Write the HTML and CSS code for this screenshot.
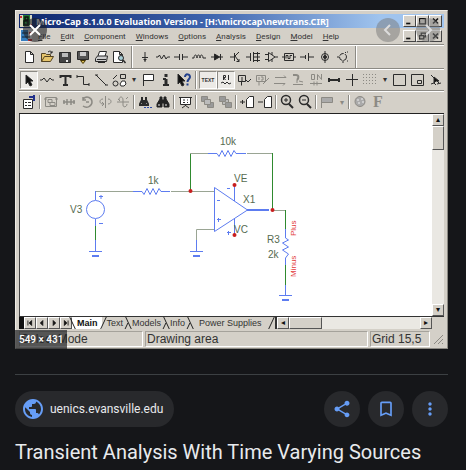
FILE: index.html
```html
<!DOCTYPE html>
<html lang="en">
<head>
  <meta charset="UTF-8">
  <meta name="viewport" content="width=device-width, initial-scale=1.0">
  <title>Transient Analysis With Time Varying Sources</title>
  <link rel="stylesheet" href="styles.css">
</head>
<body>

  <main class="viewer">
    <div class="preview">
      <div class="window">
        <div class="title-bar">
          <svg class="app-icon" viewBox="0 0 12 14"><path fill="#d8d8c0" d="M0 1h12v12H0z"/><path fill="#247a34" d="M3 1h7v11H3z"/><path fill="none" stroke="#111" stroke-width="1.5" d="M5 3h3v3H5zM4 7h4v4H4z"/><path fill="#c33" d="M0 2h2v2H0zM10 10h2v3h-2z"/></svg>
          <span class="title-text">Micro-Cap 8.1.0.0 Evaluation Version - [H:\microcap\newtrans.CIR]</span>
          <div class="win-buttons">
            <button aria-label="Minimize"><svg viewBox="0 0 12 12"><path d="M2 9h5" stroke-width="2"/></svg></button>
            <button aria-label="Maximize"><svg viewBox="0 0 12 12"><path d="M2.500 3v6.500h7V3M2 3h8" stroke-width="1.500"/></svg></button>
            <button aria-label="Close"><svg viewBox="0 0 12 12"><path d="M3 3l6 6M9 3l-6 6" stroke-width="2"/></svg></button>
          </div>
        </div>

        <div class="menu-bar">
          <svg class="app-icon" viewBox="0 0 12 14"><path fill="#eee" d="M0 0h12v13H0z"/><path fill="#367fc0" d="M1 1h7v11H1z"/><path fill="#c33" d="M9 3h3v3H9zM8 10h4v2H8z"/><path stroke="#123" d="M2 4h6M2 8h8"/></svg>
          <button><u>F</u>ile</button>
          <button><u>E</u>dit</button>
          <button><u>C</u>omponent</button>
          <button><u>W</u>indows</button>
          <button><u>O</u>ptions</button>
          <button><u>A</u>nalysis</button>
          <button><u>D</u>esign</button>
          <button><u>M</u>odel</button>
          <button><u>H</u>elp</button>
          <div class="win-buttons">
            <button aria-label="Minimize document"><svg viewBox="0 0 12 12"><path d="M2 9h5" stroke-width="2"/></svg></button>
            <button aria-label="Restore document"><svg viewBox="0 0 12 12"><path d="M2.500 5.500h5v4h-5zM4.500 5V2.500h5V7H8" stroke-width="1.500"/></svg></button>
            <button aria-label="Close document"><svg viewBox="0 0 12 12"><path d="M3 3l6 6M9 3l-6 6" stroke-width="2"/></svg></button>
          </div>
        </div>

        <div class="toolbar roomy">
          <button aria-label="New"><svg viewBox="0 0 16 16"><path fill="#fff" d="M4.500 2.500h5l3 3v8h-8zM9.500 2.500v3h3"/></svg></button>
          <button aria-label="Open"><svg viewBox="0 0 16 16"><path fill="#e5c46b" stroke="#554422" d="M2.500 12.500v-8h4l1 1h4v2M2.500 12.500l3-5h9l-3 5z"/><path d="M9 3c2-1.500 3-1 4 1m0-2v2h-2"/></svg></button>
          <button aria-label="Save"><svg viewBox="0 0 16 16"><path fill="#444" d="M2.500 3.500h11v10h-11z"/><path fill="#bbb" stroke="none" d="M5 4h6v4H5z"/><path fill="#eee" stroke="none" d="M9 11h2v2H9z"/></svg></button>
          <button aria-label="Save all"><svg viewBox="0 0 16 16"><path fill="#555" d="M2.500 2.500h11v8h-11z"/><path fill="#ccc" stroke="none" d="M5 3h6v4H5z"/><path fill="#d9bd57" stroke="#443300" d="M5.500 11.500h5l-2.500 3z"/></svg></button>
          <button aria-label="Print"><svg viewBox="0 0 16 16"><path fill="#fff" d="M5 7l1.500-4.500h7L12 7"/><path fill="#ccc" d="M2.500 9.500l2-2.500h10l-1 5.500h-11z"/><path d="M4 10.500h9M5 13.500h7"/></svg></button>
          <button aria-label="Print preview"><svg viewBox="0 0 16 16"><path fill="#fff" d="M2.500 2.500h6l3 3v8h-9zM8.500 2.500v3h3"/><circle cx="10" cy="9" r="2.500" fill="#a8d0d8"/><path stroke-width="1.500" d="M12 11l2.500 3"/></svg></button>
          <span class="sep"></span>
          <button aria-label="Ground"><svg viewBox="0 0 16 16"><path d="M8 3v9M5 8.500h6M6.500 10.500h3M7 12h2"/></svg></button>
          <button aria-label="Resistor"><svg viewBox="0 0 16 16"><path d="M1 8h2l1.500-2 2 4L9 6l2 4 1.500-2H15"/></svg></button>
          <button aria-label="Capacitor"><svg viewBox="0 0 16 16"><path d="M1 8h5.500M9.500 8H15M6.500 5v6M9.500 5v6"/></svg></button>
          <button aria-label="Inductor"><svg viewBox="0 0 16 16"><path d="M1 9h2c0-4 3-4 3 0 0-4 3-4 3 0 0-4 3-4 3 0h3"/></svg></button>
          <button aria-label="Diode"><svg viewBox="0 0 16 16"><path d="M2 8h12M11.500 5v6"/><path fill="#222" d="M5.500 5v6l5-3z"/></svg></button>
          <button aria-label="Transistor"><svg viewBox="0 0 16 16"><path d="M3 8h4M7.500 4v8M12 3L8 7l4 5.500M9.500 12.500H12V10"/></svg></button>
          <button aria-label="MOSFET"><svg viewBox="0 0 16 16"><path d="M1 8h4.500M5.500 4v8M8.500 3v10M8.500 4.500H15M8.500 8H15M8.500 11.500H15M12.500 3v10"/></svg></button>
          <button aria-label="Opamp"><svg viewBox="0 0 16 16"><path d="M5.500 3.500v9L12 8zM2 5.500h3.500M2 10.500h3.500M12 8h3M9 3v3M9 10v3"/></svg></button>
          <button aria-label="Pulse source"><svg viewBox="0 0 16 16"><path d="M3.500 4.500h9v7h-9zM1 8h2.500M12.500 8H15M5 9.500v-3h2v3h2v-3h2"/></svg></button>
          <button aria-label="Battery"><svg viewBox="0 0 16 16"><path d="M1 8h5M6.500 6v4M9.500 4v8M10 8h5"/></svg></button>
          <button aria-label="Voltage source"><svg viewBox="0 0 16 16"><circle cx="8" cy="8" r="3.500"/><circle cx="8" cy="8" r="1.500" fill="#222"/><path d="M8 2v12"/></svg></button>
          <button aria-label="Switch"><svg viewBox="0 0 16 16"><circle cx="8" cy="8" r="3.500" stroke-dasharray="5 1"/><path d="M8 12v2M10 4l1-1M12 3h1M12 12h1M4 8H2"/></svg></button>
          <span class="sep"></span>
        </div>

        <div class="toolbar">
          <button class="pressed" aria-label="Select"><svg viewBox="0 0 16 16"><path fill="#111" d="M5 3v9l2-2 2 4 2-1-2-4h3z"/></svg></button>
          <button aria-label="Component"><svg viewBox="0 0 16 16"><path d="M1 8h2l2-2 3 4 3-4 2 2h2"/></svg></button>
          <button aria-label="Text"><svg viewBox="0 0 16 16"><path stroke-width="2" d="M3 4h11M8.500 4v9M6 13h5M3.500 3v3M13.500 3v3"/></svg></button>
          <button aria-label="Wire"><svg viewBox="0 0 16 16"><path d="M2 4.500h6.500v8H14M2 3v3M14 11v3"/></svg></button>
          <button aria-label="Line"><svg viewBox="0 0 16 16"><path d="M3 3l10 10M2 3h3M12 13h3"/></svg></button>
          <button aria-label="Shapes"><svg viewBox="0 0 16 16"><path d="M2 7l4-4M9.500 2.500h5v4h-5z"/><circle cx="4.500" cy="11.500" r="2.500"/><path fill="#fff" d="M9 12l2-3h3l1 3-2 2h-3z"/></svg></button>
          <button class="drop" aria-label="More shapes">▾</button>
          <button aria-label="Flag"><svg viewBox="0 0 16 16"><path fill="#fff" d="M3.500 14V2.500h10v6h-10"/></svg></button>
          <button aria-label="Info"><svg viewBox="0 0 16 16"><path stroke-width="3" d="M8 2v3M8 7v6"/><path stroke-width="2" d="M5 7h3M5 13h6"/></svg></button>
          <button aria-label="Help"><svg viewBox="0 0 16 16"><path fill="#111" d="M2 2v10l2-2 2 4 2-1-2-4h3z"/><path stroke="#23408c" stroke-width="2" d="M9 5c0-4 5-3 5 0 0 2-2.500 2-2.500 5M11.500 11.500v2"/></svg></button>
          <span class="sep"></span>
          <button class="pressed" aria-label="Grid text"><span class="tiny">TEXT</span></button>
          <button class="pressed" aria-label="Attribute text"><svg viewBox="0 0 16 16"><path d="M5.500 8V3.500h2v2h-2l2 2.500M10.500 3v5M3 11l2-1 2 2 2-2 2 2 2-1"/></svg></button>
          <button aria-label="Node numbers"><svg viewBox="0 0 16 16"><path d="M2.500 3.500h7v6h-7zM6 5v4M5.500 9.500v4M10 8l2 2 3-3"/></svg></button>
          <button class="dim" aria-label="Node voltages"><svg viewBox="0 0 16 16"><path d="M2.500 3.500h9v6h-9zM5 5v3M7 5h2v3H7M5 9.500v4M9 12l6-6"/></svg></button>
          <button class="dim" aria-label="Currents"><svg viewBox="0 0 16 16"><path d="M3 5.500h11l-2-2M2 11.500h11l-2 2"/></svg></button>
          <button class="dim" aria-label="Power"><svg viewBox="0 0 16 16"><path stroke-width="2" d="M3 3h3c3 0 3 3 1 5"/><path d="M3 12.500h10M7 8v3M9 9l4 1"/></svg></button>
          <button class="dim" aria-label="Conditions"><svg viewBox="0 0 16 16"><path d="M3.500 2.500h3v5h-3zM9.500 8V2.500l4 5V2M2 11.500h12M6 9.500v4M9 9.500v4"/></svg></button>
          <button aria-label="Pin connections"><svg viewBox="0 0 16 16"><path stroke-width="2" d="M2 8h12"/><path stroke-width="2" d="M3 6v4M13 6v4"/></svg></button>
          <button aria-label="Cross-hair"><svg viewBox="0 0 16 16"><path d="M2 7.500h12M8.500 2v12"/></svg></button>
          <button class="dim" aria-label="Grid"><svg viewBox="0 0 16 16"><path stroke-dasharray="1 2" d="M1 2.500h14M1 5.500h14M1 8.500h14M1 11.500h14"/></svg></button>
          <button class="drop" aria-label="Grid options">▾</button>
          <button aria-label="Border"><svg viewBox="0 0 16 16"><path d="M2.500 2.500h12v11h-12z"/></svg></button>
          <button aria-label="Title"><svg viewBox="0 0 16 16"><path d="M2.500 2.500h12v11h-12zM8.500 8.500h4v3h-4z"/></svg></button>
          <button aria-label="Rubberbanding"><svg viewBox="0 0 16 16"><path d="M4 3l8 8M4 12l3-1 2 2M10 12l4-1"/><path fill="#111" d="M7 5v6l2-2h3z"/></svg></button>
        </div>

        <div class="toolbar compact">
          <button aria-label="Properties"><svg viewBox="0 0 16 16"><path fill="#fff" d="M2.500 5.500h9v9h-9z"/><path d="M4 8.500h2M7 8.500h3M4 11.500h2M7 11.500h3"/><path stroke="#22318c" stroke-width="2" d="M8 3h5v3M13 1v6"/></svg></button>
          <span class="sep"></span>
          <button class="dim" aria-label="Box"><svg viewBox="0 0 16 16"><path d="M2.500 3.500h11v9h-11zM1 5h3M12 5h3M5 5.500h4v3H5zM7 8.500h5v3H7z"/></svg></button>
          <button class="dim" aria-label="Step"><svg viewBox="0 0 16 16"><path stroke-width="1.500" d="M2 8h4M10 8h4M3 6v4M6 5v6M10 5v6M13 6v4M6 8h4"/></svg></button>
          <button class="dim" aria-label="Rotate"><svg viewBox="0 0 16 16"><path stroke-width="1.500" d="M4 3v3h3M4 5c4-4 9-1 9 3s-5 7-9 4M7 8h3"/></svg></button>
          <button class="dim" aria-label="Flip X"><svg viewBox="0 0 16 16"><path d="M8.500 2v12M6 5c-4 0-4 5 0 5M5 8l2 2-2 2M11 5c4 0 4 5 0 5"/></svg></button>
          <button class="dim" aria-label="Flip Y"><svg viewBox="0 0 16 16"><path d="M2 8h12M4 6c0-4 4-4 4 0v5c0 3 4 2 4-1M3 5l2 2M11 5l2-2"/></svg></button>
          <span class="sep"></span>
          <button aria-label="Find next"><svg viewBox="0 0 16 16"><path stroke-width="2" d="M5 3v3l-2 4v1h3V7h2v4h3v-1L9 6V3"/><path stroke="#2c4aa8" stroke-dasharray="2 1" d="M7 13.500h8"/></svg></button>
          <button aria-label="Find"><svg viewBox="0 0 16 16"><path fill="#222" stroke="#222" d="M5 3h2v3h2V3h2v2l3 5v3H9V9H7v4H2v-3l3-5z"/><path stroke="#eee" d="M4 10v2M11 10v2"/></svg></button>
          <span class="sep"></span>
          <button aria-label="Presentation"><svg viewBox="0 0 16 16"><path fill="#fff" d="M3.500 3.500h10v7h-10z"/><path d="M2 3.500h13M8.500 10v2M5 14l3.500-2.500L12 14M6 6h2M10 6h1M6 8.500h2M10 8.500h1"/></svg></button>
          <span class="sep"></span>
          <button class="dim" aria-label="Bring to front"><svg viewBox="0 0 16 16"><path fill="#999" d="M2.500 2.500h6v5h-6zM8.500 8.500h6v5h-6z"/><path fill="#bbb" d="M5.500 5.500h6v5h-6z"/></svg></button>
          <button class="dim" aria-label="Send to back"><svg viewBox="0 0 16 16"><path fill="#bbb" d="M5.500 5.500h6v5h-6z"/><path fill="#999" d="M2.500 2.500h6v5h-6zM8.500 8.500h6v5h-6z"/></svg></button>
          <span class="sep"></span>
          <button aria-label="Add page"><svg viewBox="0 0 16 16"><path fill="#fff" d="M7.500 13.500v-8l3-3h4v11z"/><path d="M1 8h5M3.500 6v4"/></svg></button>
          <button aria-label="Delete page"><svg viewBox="0 0 16 16"><path fill="#fff" d="M7.500 13.500v-8l3-3h4v11z"/><path d="M1 8h5"/></svg></button>
          <span class="sep"></span>
          <button aria-label="Zoom in"><svg viewBox="0 0 16 16"><circle cx="7" cy="6" r="4.500" stroke-width="1.500"/><path d="M5 6h4M7 4v4"/><path stroke-width="2" d="M10 10l4 4"/></svg></button>
          <button aria-label="Zoom out"><svg viewBox="0 0 16 16"><circle cx="7" cy="6" r="4.500" stroke-width="1.500"/><path d="M5 6h4"/><path stroke-width="2" d="M10 10l4 4"/></svg></button>
          <span class="sep"></span>
          <button class="dim" aria-label="Go to flag"><svg viewBox="0 0 16 16"><path fill="#aaa" d="M2.500 14V3.500h11v5h-11"/></svg></button>
          <button class="drop dim" aria-label="Flags">▾</button>
          <span class="sep"></span>
          <button class="dim" aria-label="Color"><svg viewBox="0 0 16 16"><circle cx="8" cy="7.500" r="5" fill="#aaa"/><path stroke="#eee" d="M5 6h2M9 5h2M6 9h2M10 8h2"/></svg></button>
          <button class="dim" aria-label="Font"><span class="font-letter">F</span></button>
        </div>

        <div class="workspace">
          <div class="canvas">
            <svg class="schematic" viewBox="20 114 412 202" role="img" aria-label="Op-amp circuit">
              <g class="wire">
                <path d="M95.500 225v16M190.500 191v-38M272.500 153v57M285.500 210v19M285.500 264v22"/>
                <path class="faint" d="M95.500 191.500H133M171 191.500h43M190 153.500h18M247 153.500h25M214 229.500h-17.500V240M272 210.500h13"/>
              </g>
              <g class="part">
                <path d="M95.500 191v9M95.500 219v7M95.500 240v11M285.500 229v9M285.500 258v7M285.500 285v10M196.500 240v11"/>
                <circle cx="95.500" cy="209.500" r="9"/>
                <path d="M133 191.500h9l2 3 3-6 3 6 3-6 3 6 3-6 2 3h9"/>
                <path d="M208 153.500h9l2 3 3-6 3 6 3-6 3 6 3-6 2 3h10"/>
                <path d="M285.500 238l3 2-6 3 6 4-6 3 6 4-3 4"/>
                <path d="M214.500 187.500v44l33-21.500zM234.500 185v16M234.500 219v16"/>
                <path class="thick" d="M247 210h22M92 256h7M193 256h7M282 300h7"/>
                <path d="M89 251.500h13M190 251.500h13M279 295.500h13"/>
                <path d="M99 196.500h4M101 195v4M99 223.500h4M217 200.500h3M217 219.500h4M218.500 218v4M227 188.500h3M227 232.500h4M228.500 231v4"/>
              </g>
              <g class="node">
                <circle cx="190.500" cy="191" r="2"/>
                <circle cx="272.500" cy="210" r="2"/>
                <circle cx="234.500" cy="185" r="2"/>
                <circle cx="234.500" cy="235" r="2"/>
              </g>
              <g class="label">
                <text x="70" y="213">V3</text>
                <text x="148" y="184">1k</text>
                <text x="220" y="145">10k</text>
                <text x="234" y="182">VE</text>
                <text x="234" y="233">VC</text>
                <text x="243" y="203">X1</text>
                <text x="267" y="243">R3</text>
                <text x="268" y="258">2k</text>
              </g>
              <g class="pin-label">
                <text transform="translate(296 236) rotate(-90)">Plus</text>
                <text transform="translate(296 277) rotate(-90)">Minus</text>
              </g>
            </svg>
          </div>
          <div class="scroll-y">
            <button aria-label="Scroll up">▴</button>
            <span class="thumb"></span>
            <button class="scroll-end" aria-label="Scroll down">▾</button>
          </div>
        </div>

        <div class="page-bar">
          <div class="pager">
            <button aria-label="First page"><svg viewBox="0 0 12 12"><path d="M3.500 3v6M8 3L5 6l3 3z"/></svg></button>
            <button aria-label="Previous page"><svg viewBox="0 0 12 12"><path d="M7 3L4 6l3 3z"/></svg></button>
            <button aria-label="Next page"><svg viewBox="0 0 12 12"><path d="M5 3l3 3-3 3z"/></svg></button>
            <button aria-label="Last page"><svg viewBox="0 0 12 12"><path d="M8.500 3v6M4 3l3 3-3 3z"/></svg></button>
          </div>
          <div class="tabs">
            <button class="tab active">Main</button>
            <button class="tab">Text</button>
            <button class="tab">Models</button>
            <button class="tab">Info</button>
            <button class="tab last">Power Supplies</button>
          </div>
          <div class="scroll-x">
            <button aria-label="Scroll left">◂</button>
            <span class="thumb"></span>
            <button class="scroll-end" aria-label="Scroll right">▸</button>
          </div>
        </div>

        <div class="status-bar">
          <span class="mode">Select Mode</span>
          <span class="area">Drawing area</span>
          <span class="grid-size">Grid 15,5</span>
          <svg class="grip" viewBox="0 0 12 14"><path d="M2 13L11 4M6 13l5-5M10 13l1-1"/></svg>
        </div>
      </div>

      <button class="overlay close" aria-label="Close"><svg viewBox="0 0 24 24"><path d="M7 7l10 10M17 7L7 17"/></svg></button>
      <button class="overlay prev" aria-label="Previous image"><svg viewBox="0 0 24 24"><path d="M14 7l-5 5 5 5"/></svg></button>
      <button class="overlay next" aria-label="Next image"><svg viewBox="0 0 24 24"><path d="M10 7l5 5-5 5"/></svg></button>
      <span class="dimensions">549 × 431</span>
    </div>

    <div class="details">
      <div class="actions">
        <a class="source" href="#">
          <svg viewBox="0 0 24 24"><path d="M12 2C6.480 2 2 6.480 2 12s4.480 10 10 10 10-4.480 10-10S17.520 2 12 2zm-1 17.930c-3.950-.490-7-3.850-7-7.930 0-.620.080-1.210.210-1.790L9 15v1c0 1.100.900 2 2 2v1.930zm6.900-2.540c-.260-.810-1-1.390-1.900-1.390h-1v-3c0-.550-.450-1-1-1H8v-2h2c.550 0 1-.450 1-1V7h2c1.100 0 2-.900 2-2v-.410c2.930 1.190 5 4.060 5 7.410 0 2.080-.800 3.970-2.100 5.390z"/></svg>
          <span>uenics.evansville.edu</span>
        </a>
        <button class="round" aria-label="Share"><svg viewBox="0 0 24 24"><path d="M18 16.080c-.760 0-1.440.300-1.960.770L8.910 12.700c.050-.230.090-.460.090-.700s-.040-.470-.090-.700l7.050-4.110c.540.500 1.250.810 2.040.810 1.660 0 3-1.340 3-3s-1.340-3-3-3-3 1.340-3 3c0 .240.040.470.090.700L8.040 9.810C7.500 9.310 6.790 9 6 9c-1.660 0-3 1.340-3 3s1.340 3 3 3c.790 0 1.500-.310 2.040-.810l7.120 4.160c-.050.210-.080.430-.080.650 0 1.610 1.310 2.920 2.920 2.920s2.920-1.310 2.920-2.920-1.310-2.920-2.920-2.920z"/></svg></button>
        <button class="round" aria-label="Save"><svg viewBox="0 0 24 24"><path d="M17 3H7c-1.100 0-2 .900-2 2v16l7-3 7 3V5c0-1.100-.900-2-2-2zm0 15l-5-2.180L7 18V5h10v13z"/></svg></button>
        <button class="round" aria-label="More"><svg viewBox="0 0 24 24"><path d="M12 8c1.100 0 2-.900 2-2s-.900-2-2-2-2 .900-2 2 .900 2 2 2zm0 2c-1.100 0-2 .900-2 2s.900 2 2 2 2-.900 2-2-.900-2-2-2zm0 6c-1.100 0-2 .900-2 2s.900 2 2 2 2-.900 2-2-.900-2-2-2z"/></svg></button>
      </div>
      <h1>Transient Analysis With Time Varying Sources</h1>
    </div>
  </main>

</body>
</html>
```
FILE: styles.css
```css
* {
  box-sizing: border-box;
}

body {
  margin: 0;
  background-color: #151619;
  font-family: Roboto, sans-serif;
  color: #e8eaed;
}

button {
  border: none;
  padding: 0;
  background: none;
  font: inherit;
  color: inherit;
  cursor: pointer;
}

svg {
  display: block;
}

.viewer {
  padding: 10px 18px 4px 15px;
}

.preview {
  position: relative;
}

/* application window */
.window {
  padding: 3px 3px 1px;
  background-color: #d4d0c8;
  border: 1px solid #eeebe4;
  border-right-color: #8c8a84;
  border-bottom-color: #8c8a84;
  font-family: "Liberation Sans", Arial, sans-serif;
  font-size: 9px;
  color: #333;
}

.title-bar {
  display: flex;
  align-items: center;
  height: 14px;
  padding-right: 2px;
  background: linear-gradient(to right, #0d246b, #3f65ae 45%, #a0c4ee 85%);
  color: #fff;
}

.app-icon {
  width: 12px;
  height: 14px;
  margin: 0 4px 0 1px;
}

.title-text {
  font-family: "Noto Sans", sans-serif;
  font-weight: bold;
  white-space: nowrap;
}

.win-buttons {
  display: flex;
  margin-left: auto;
}

.win-buttons button {
  width: 13px;
  height: 12px;
  background-color: #d4d0c8;
  border: 1px solid #fff;
  border-right-color: #444;
  border-bottom-color: #444;
}

.win-buttons svg {
  width: 11px;
  height: 10px;
  fill: none;
  stroke: #111;
}

.menu-bar {
  display: flex;
  align-items: center;
  gap: 10px;
  height: 16px;
  padding-right: 2px;
  font-family: Roboto, sans-serif;
  font-size: 8px;
}

.menu-bar .app-icon {
  margin-right: -4px;
}

/* toolbars */
.toolbar {
  display: flex;
  align-items: center;
  height: 22px;
  padding-left: 1px;
  border-top: 1px solid #8c8a84;
  box-shadow: inset 0 1px #fff;
}

.toolbar.roomy {
  height: 24px;
}

.toolbar.compact {
  height: 23px;
}

.toolbar button {
  display: flex;
  justify-content: center;
  align-items: center;
  width: 18px;
  height: 18px;
}

.toolbar svg {
  width: 16px;
  height: 16px;
  fill: none;
  stroke: #2b2b2b;
}

.toolbar .pressed {
  background-color: #eceae6;
  border: 1px solid #8c8a84;
  border-right-color: #fff;
  border-bottom-color: #fff;
}

.toolbar .dim {
  color: #8c8a84;
}

.toolbar .dim svg {
  stroke: #8c8a84;
}

.toolbar .drop {
  width: 11px;
  font-size: 8px;
}

.toolbar .sep {
  width: 2px;
  height: 18px;
  margin: 0 2px;
  border-left: 1px solid #8c8a84;
  border-right: 1px solid #fff;
}

.toolbar.roomy .sep {
  height: 22px;
  margin: 0 3px;
}

.toolbar.compact .sep {
  height: 14px;
  margin: 0 1px;
}

.tiny {
  font-size: 5px;
  font-weight: bold;
}

.font-letter {
  font-family: "Liberation Serif", serif;
  font-size: 16px;
  font-weight: bold;
}

/* drawing area */
.workspace {
  display: flex;
  border-top: 1px solid #222;
}

.canvas {
  flex: 1;
  background-color: #fff;
  border-left: 1px solid #444;
}

.schematic {
  width: 412px;
  max-width: 100%;
  fill: none;
}

.wire {
  stroke: #2f8a2f;
}

.wire .faint {
  stroke: #9aa594;
}

.part {
  stroke: #5d7cf0;
}

.part .thick {
  stroke-width: 2px;
}

.node {
  fill: #c81e1e;
}

.label {
  fill: #566b50;
  font-size: 10px;
}

.pin-label {
  fill: #e33c3c;
  font-size: 8px;
}

.scroll-y {
  display: flex;
  flex-direction: column;
  width: 12px;
  background-color: #eae8e3;
}

.scroll-y button,
.scroll-x button {
  width: 12px;
  height: 12px;
  font-size: 8px;
  line-height: 10px;
  background-color: #d4d0c8;
  border: 1px solid #fff;
  border-right-color: #555;
  border-bottom-color: #555;
  color: #111;
}

.thumb {
  background-color: #d4d0c8;
  border: 1px solid #fff;
  border-right-color: #555;
  border-bottom-color: #555;
}

.scroll-y .thumb {
  height: 24px;
}

.scroll-y .scroll-end {
  margin-top: auto;
}

.page-bar {
  display: flex;
  height: 13px;
  padding-right: 12px;
  border-top: 1px solid #333;
}

.pager {
  display: flex;
  border-left: 5px solid #111;
}

.pager button {
  width: 12px;
  height: 12px;
  border: 1px solid #fff;
  border-right-color: #555;
  border-bottom-color: #555;
}

.pager svg {
  width: 10px;
  height: 10px;
  fill: #111;
  stroke: #111;
}

.tabs {
  display: flex;
}

.tab {
  position: relative;
  padding: 0 4px 0 5px;
  line-height: 12px;
}

/* slanted edges where neighbouring tabs meet */
.tab::before,
.tab::after {
  content: "";
  position: absolute;
  top: 0;
  right: -2px;
  width: 1px;
  height: 12px;
  background-color: #222;
  transform: skewX(-25deg);
}

.tab::before {
  transform: skewX(25deg);
}

.tab::after {
  top: 6px;
  right: 0;
  height: 6px;
}

.tab.active::before {
  right: auto;
  left: 0;
}

.tab.active::after,
.tab.last::after {
  top: 0;
  right: -2px;
  height: 12px;
}

.tab.last::before {
  display: none;
}

.tab.active {
  background-color: #fff;
  font-weight: bold;
  color: #111;
}

.tab.last {
  padding: 0 8px 0 10px;
}

.scroll-x {
  display: flex;
  flex: 1;
  margin-left: 5px;
  border-left: 2px solid #333;
  background-color: #eae8e3;
}

.scroll-x .thumb {
  width: 33px;
}

.scroll-x .scroll-end {
  margin-left: auto;
}

.status-bar {
  display: flex;
  gap: 2px;
  padding-top: 2px;
  font-size: 12px;
  line-height: 14px;
}

.status-bar span {
  padding-left: 1px;
  border: 1px solid #a5a29b;
  border-right-color: #fff;
  border-bottom-color: #fff;
}

.status-bar .mode {
  width: 124px;
}

.status-bar .area {
  flex: 1;
}

.status-bar .grid-size {
  width: 60px;
}

.grip {
  width: 12px;
  height: 14px;
  stroke: #8c8a84;
}

/* controls lying over the picture */
.overlay {
  position: absolute;
  top: 8px;
  width: 24px;
  height: 24px;
  border-radius: 50%;
  background-color: rgba(32, 33, 36, 0.6);
}

.overlay svg {
  width: 24px;
  height: 24px;
  fill: none;
  stroke: #fff;
  stroke-width: 2px;
}

.overlay.close {
  left: 8px;
}

.overlay.prev {
  right: 48px;
  background-color: rgba(120, 120, 120, 0.5);
}

.overlay.next {
  right: 8px;
  background-color: rgba(120, 120, 120, 0.5);
}

.overlay.prev svg,
.overlay.next svg {
  stroke: #dcdcdc;
}

.dimensions {
  position: absolute;
  left: 0;
  bottom: 0;
  padding: 0 4px;
  background-color: rgba(32, 33, 36, 0.7);
  font-size: 10px;
  font-weight: 500;
  line-height: 19px;
  color: #fff;
}

/* source link, action buttons and title */
.details {
  margin-top: 25px;
  border-top: 1px solid #3c4043;
}

.actions {
  display: flex;
  gap: 8px;
  margin-top: 16px;
}

.source {
  display: flex;
  align-items: center;
  gap: 5px;
  height: 36px;
  margin-right: auto;
  padding: 0 11px 0 6px;
  border-radius: 18px;
  background-color: #28292c;
  font-size: 12px;
  color: #e8eaed;
  text-decoration: none;
}

.source svg {
  width: 24px;
  height: 24px;
  fill: #669df6;
}

.round {
  display: flex;
  justify-content: center;
  align-items: center;
  width: 36px;
  height: 36px;
  border-radius: 50%;
  background-color: #28292c;
}

.round svg {
  width: 20px;
  height: 20px;
  fill: #669df6;
}

h1 {
  margin: 13px 0 0;
  font-size: 20px;
  font-weight: 400;
  line-height: 24px;
}
```
